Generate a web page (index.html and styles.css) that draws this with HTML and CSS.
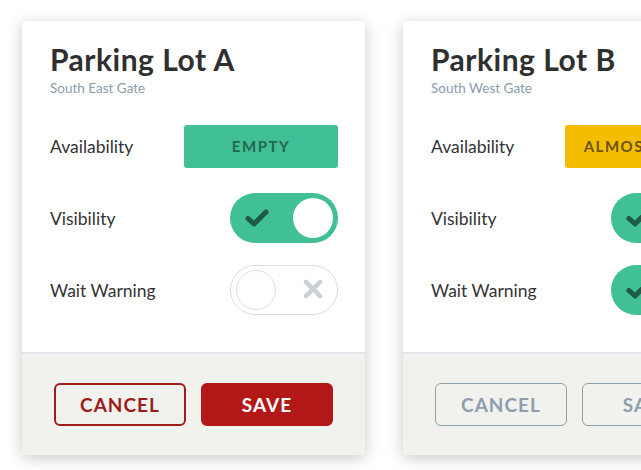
FILE: index.html
```html
<!DOCTYPE html>
<html lang="en">
<head>
<meta charset="utf-8">
<title>Parking Lots</title>
<link rel="stylesheet" href="styles.css">
</head>
<body>
<div class="board">
  <section class="card">
    <div class="card-body">
      <header class="card-head">
        <h2 class="title">Parking Lot A</h2>
        <p class="subtitle">South East Gate</p>
      </header>
      <div class="rows">
        <div class="row">
          <span class="label">Availability</span>
          <span class="badge badge-empty">EMPTY</span>
        </div>
        <div class="row">
          <span class="label">Visibility</span>
          <span class="toggle toggle-on">
            <svg class="ico-check" width="24" height="18" viewBox="0 0 24 18"><path d="M3 9.5 L9 15 L21 3" fill="none" stroke="currentColor" stroke-width="5" stroke-linecap="round" stroke-linejoin="round"/></svg>
            <span class="knob"></span>
          </span>
        </div>
        <div class="row">
          <span class="label">Wait Warning</span>
          <span class="toggle toggle-off">
            <span class="knob"></span>
            <svg class="ico-x" width="20" height="20" viewBox="0 0 20 20"><path d="M3 3 L17 17 M17 3 L3 17" fill="none" stroke="currentColor" stroke-width="4.5" stroke-linecap="round"/></svg>
          </span>
        </div>
      </div>
    </div>
    <footer class="card-foot">
      <button class="btn btn-outline">CANCEL</button>
      <button class="btn btn-solid">SAVE</button>
    </footer>
  </section>

  <section class="card">
    <div class="card-body">
      <header class="card-head">
        <h2 class="title">Parking Lot B</h2>
        <p class="subtitle">South West Gate</p>
      </header>
      <div class="rows">
        <div class="row">
          <span class="label">Availability</span>
          <span class="badge badge-almost">ALMOST FULL</span>
        </div>
        <div class="row">
          <span class="label">Visibility</span>
          <span class="toggle toggle-on">
            <svg class="ico-check" width="24" height="18" viewBox="0 0 24 18"><path d="M3 9.5 L9 15 L21 3" fill="none" stroke="currentColor" stroke-width="5" stroke-linecap="round" stroke-linejoin="round"/></svg>
            <span class="knob"></span>
          </span>
        </div>
        <div class="row">
          <span class="label">Wait Warning</span>
          <span class="toggle toggle-on">
            <svg class="ico-check" width="24" height="18" viewBox="0 0 24 18"><path d="M3 9.5 L9 15 L21 3" fill="none" stroke="currentColor" stroke-width="5" stroke-linecap="round" stroke-linejoin="round"/></svg>
            <span class="knob"></span>
          </span>
        </div>
      </div>
    </div>
    <footer class="card-foot">
      <button class="btn btn-muted">CANCEL</button>
      <button class="btn btn-muted">SAVE</button>
    </footer>
  </section>
</div>
</body>
</html>
```

FILE: styles.css
```css
* { box-sizing: border-box; }

html, body {
  margin: 0;
  padding: 0;
  background: #ffffff;
  overflow: hidden;
  width: 641px;
  height: 470px;
}

body {
  font-family: "Lato", "Open Sans", sans-serif;
  color: #333333;
}

.board {
  display: flex;
  gap: 38px;
  padding: 21px 0 0 22px;
}

.card {
  flex: 0 0 343px;
  width: 343px;
  height: 434px;
  background: #ffffff;
  border-radius: 4px;
  box-shadow: 0 3px 15px rgba(0, 0, 0, 0.22);
  display: flex;
  flex-direction: column;
  overflow: hidden;
}

.card-body {
  flex: 1;
  padding: 21px 27px 0 28px;
}

.card-head {
  height: 79px;
}

.title {
  margin: 0;
  font-size: 30px;
  line-height: 35px;
  font-weight: 700;
  color: #2f2f2f;
  letter-spacing: 0.5px;
}

.subtitle {
  margin: 3px 0 0;
  font-size: 13.5px;
  line-height: 16px;
  color: #8b9cab;
}

.rows {
  display: flex;
  flex-direction: column;
  gap: 22px;
}

.row {
  height: 50px;
  display: flex;
  align-items: center;
  justify-content: space-between;
}

.label {
  font-size: 17.5px;
  color: #333333;
}

.badge {
  width: 154px;
  height: 43px;
  border-radius: 3px;
  display: flex;
  align-items: center;
  justify-content: center;
  font-size: 15px;
  font-weight: 700;
  letter-spacing: 1.5px;
  white-space: nowrap;
}

.badge-empty {
  background: #41bf96;
  color: #22684e;
}

.badge-almost {
  background: #f5bd00;
  color: #6b5410;
}

.toggle {
  position: relative;
  width: 108px;
  height: 50px;
  border-radius: 25px;
  flex: 0 0 108px;
}

.toggle-on {
  background: #41bf96;
  color: #1f5a45;
}

.toggle-off {
  background: #ffffff;
  border: 1px solid #d6dcdf;
  color: #c9d0d4;
}

.knob {
  position: absolute;
  top: 5px;
  width: 40px;
  height: 40px;
  border-radius: 50%;
  background: #ffffff;
}

.toggle-on .knob {
  right: 5px;
}

.toggle-off .knob {
  top: 4px;
  left: 5px;
  border: 1px solid #d6dcdf;
}

.ico-check {
  position: absolute;
  left: 15px;
  top: 16px;
}

.ico-x {
  position: absolute;
  left: 72px;
  top: 13px;
}

.card-foot {
  height: 103px;
  background: #f1f1ee;
  border-top: 2px solid #dfe5e9;
  display: flex;
  gap: 15px;
  padding: 29px 32px 0 32px;
}

.btn {
  width: 132px;
  height: 43px;
  border-radius: 6px;
  font-family: inherit;
  font-size: 19px;
  font-weight: 700;
  letter-spacing: 1px;
  cursor: pointer;
  padding: 0;
}

.btn-outline {
  background: transparent;
  border: 2px solid #9c1c1c;
  color: #9c1c1c;
}

.btn-solid {
  background: #b21818;
  border: 2px solid #b21818;
  color: #ffffff;
}

.btn-muted {
  background: transparent;
  border: 1.5px solid #8d9eac;
  color: #8d9eac;
}
```
